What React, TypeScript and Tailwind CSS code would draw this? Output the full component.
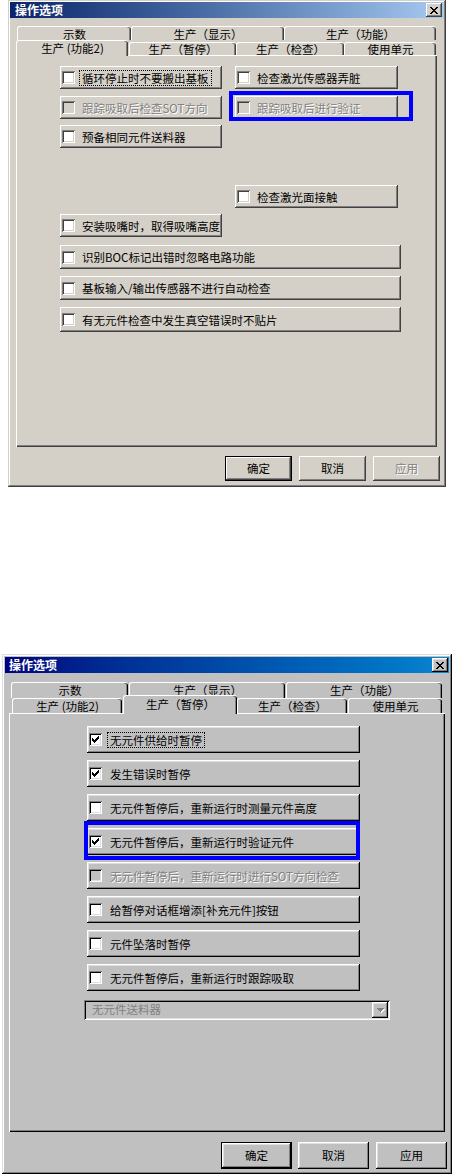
import React from "react";

type Theme = "a" | "b";

const T = {
  a: {
    raised:
      "bg-[#d4d0c8] shadow-[inset_-1px_-1px_0_#404040,inset_1px_1px_0_#ffffff,inset_-2px_-2px_0_#808080,inset_2px_2px_0_#d4d0c8]",
    window:
      "bg-[#d4d0c8] shadow-[inset_-1px_-1px_0_#404040,inset_1px_1px_0_#d4d0c8,inset_-2px_-2px_0_#808080,inset_2px_2px_0_#ffffff]",
    boxOn:
      "bg-white shadow-[inset_1px_1px_0_#808080,inset_-1px_-1px_0_#ffffff,inset_2px_2px_0_#404040,inset_-2px_-2px_0_#d4d0c8]",
    boxOff:
      "bg-[#d4d0c8] shadow-[inset_1px_1px_0_#808080,inset_-1px_-1px_0_#ffffff,inset_2px_2px_0_#404040,inset_-2px_-2px_0_#d4d0c8]",
    tab: "bg-[#d4d0c8] border-l border-t border-white rounded-t-[3px] shadow-[inset_-1px_0_0_#404040,inset_-2px_0_0_#808080]",
    panel:
      "bg-[#d4d0c8] shadow-[inset_1px_1px_0_#ffffff,inset_-1px_-1px_0_#404040,inset_-2px_-2px_0_#808080]",
    title: "bg-linear-to-r from-[#0a246a] to-[#a6caf0]",
  },
  b: {
    raised:
      "bg-[#c0c0c0] shadow-[inset_-1px_-1px_0_#000000,inset_1px_1px_0_#ffffff,inset_-2px_-2px_0_#808080,inset_2px_2px_0_#dfdfdf]",
    window:
      "bg-[#c0c0c0] shadow-[inset_-1px_-1px_0_#000000,inset_1px_1px_0_#dfdfdf,inset_-2px_-2px_0_#808080,inset_2px_2px_0_#ffffff]",
    boxOn:
      "bg-white shadow-[inset_1px_1px_0_#808080,inset_-1px_-1px_0_#ffffff,inset_2px_2px_0_#000000,inset_-2px_-2px_0_#dfdfdf]",
    boxOff:
      "bg-[#c0c0c0] shadow-[inset_1px_1px_0_#808080,inset_-1px_-1px_0_#ffffff,inset_2px_2px_0_#000000,inset_-2px_-2px_0_#dfdfdf]",
    tab: "bg-[#c0c0c0] border-l border-t border-white rounded-t-[3px] shadow-[inset_-1px_0_0_#000000,inset_-2px_0_0_#808080]",
    panel:
      "bg-[#c0c0c0] shadow-[inset_1px_1px_0_#ffffff,inset_-1px_-1px_0_#000000,inset_-2px_-2px_0_#808080]",
    title: "bg-linear-to-r from-[#000080] to-[#1084d0]",
  },
};

const DIS = "text-[#808080] [text-shadow:1px_1px_0_#ffffff]";

function Pixels({ rows, color }: { rows: string[]; color: string }) {
  return (
    <svg width={rows[0].length} height={rows.length} shapeRendering="crispEdges">
      {rows.flatMap((r, y) =>
        r.split("").map((c, x) =>
          c === "1" ? <rect key={x + "-" + y} x={x} y={y} width="1" height="1" fill={color} /> : null
        )
      )}
    </svg>
  );
}

const CLOSE = ["11000011", "01100110", "00111100", "00011000", "00111100", "01100110", "11000011"];
const CHECK = ["0000001", "0000011", "1000111", "1101110", "1111100", "0111000", "0010000"];
const ARROW = ["1111111", "0111110", "0011100", "0001000"];

function TitleBar({ theme, cls }: { theme: Theme; cls: string }) {
  return (
    <div className={`${T[theme].title} ${cls} h-[16px] flex items-center justify-between`}>
      <span className="text-white font-bold text-[12px] leading-none whitespace-nowrap">操作选项</span>
      <div className={`${T[theme].raised} w-[16px] h-[14px] flex items-center justify-center`}>
        <Pixels rows={CLOSE} color="#000000" />
      </div>
    </div>
  );
}

function Tab({ theme, label, cls, selected }: { theme: Theme; label: string; cls: string; selected?: boolean }) {
  return (
    <div
      className={`${T[theme].tab} ${cls} shrink-0 flex items-center justify-center ${
        selected ? "relative z-10 -mb-[1px]" : ""
      }`}
    >
      <span className="text-[11.5px] leading-[11px] whitespace-nowrap">{label}</span>
    </div>
  );
}

function CkBtn({
  theme,
  label,
  cls,
  checked,
  disabled,
  focus,
}: {
  theme: Theme;
  label: string;
  cls: string;
  checked?: boolean;
  disabled?: boolean;
  focus?: boolean;
}) {
  const textCls =
    theme === "a"
      ? focus
        ? "ml-[4px] px-[2px] border border-dotted border-black"
        : "ml-[7px]"
      : focus
      ? "ml-[5px] px-[2px] border border-dotted border-black"
      : "ml-[8px]";
  return (
    <div className={`${T[theme].raised} ${cls} shrink-0 flex items-center pl-[2px]`}>
      <div
        className={`${disabled ? T[theme].boxOff : T[theme].boxOn} w-[13px] h-[13px] shrink-0 flex items-center justify-center`}
      >
        {checked && <Pixels rows={CHECK} color="#000000" />}
      </div>
      <span className={`${textCls} text-[11.5px] leading-[14px] whitespace-nowrap ${disabled ? DIS : ""}`}>
        {label}
      </span>
    </div>
  );
}

function DlgBtn({
  theme,
  label,
  cls,
  def,
  disabled,
}: {
  theme: Theme;
  label: string;
  cls: string;
  def?: boolean;
  disabled?: boolean;
}) {
  return (
    <div className={`${cls} shrink-0 ${def ? "border border-black" : ""} flex`}>
      <div className={`${T[theme].raised} flex-1 flex items-center justify-center`}>
        <span className={`text-[11.5px] leading-none ${disabled ? DIS : ""}`}>{label}</span>
      </div>
    </div>
  );
}

function Blue({ cls }: { cls: string }) {
  return <div className={`absolute border-[4px] border-[#0000ff] pointer-events-none ${cls}`} />;
}

function TopDialog() {
  const t: Theme = "a";
  return (
    <div className={`${T.a.window} ml-[8px] w-[438px] h-[487px] flex flex-col`}>
      <TitleBar theme={t} cls="mx-[2px] mt-[2px] pl-[5px] pr-[2px]" />
      <div className="ml-[8px] mt-[8px] w-[421px] flex flex-col">
        <div className="flex h-[14px] pl-[1px]">
          <Tab theme={t} label="示数" cls="w-[114px] h-[14px] pt-[1px]" />
          <Tab theme={t} label="生产（显示）" cls="w-[153px] h-[14px] pt-[1px]" />
          <Tab theme={t} label="生产（功能）" cls="w-[152px] h-[14px] pt-[1px]" />
        </div>
        <div className="flex h-[15px] items-end">
          <Tab theme={t} label="生产 (功能2)" cls="w-[112px] h-[16px] pb-[1px]" selected />
          <Tab theme={t} label="生产（暂停）" cls="ml-[1px] w-[107px] h-[13px] pt-[1px]" />
          <Tab theme={t} label="生产（检查）" cls="w-[108px] h-[13px] pt-[1px]" />
          <Tab theme={t} label="使用单元" cls="w-[92px] h-[13px] pt-[1px]" />
        </div>
        <div className={`${T.a.panel} h-[392px] flex flex-col pl-[44px] pt-[11px]`}>
          <div className="flex gap-[13px]">
            <CkBtn theme={t} label="循环停止时不要搬出基板" cls="w-[162px] h-[23px]" focus />
            <CkBtn theme={t} label="检查激光传感器弄脏" cls="w-[163px] h-[23px]" />
          </div>
          <div className="flex gap-[13px] mt-[7px]">
            <CkBtn theme={t} label="跟踪吸取后检查SOT方向" cls="w-[162px] h-[23px]" disabled />
            <div className="relative">
              <CkBtn theme={t} label="跟踪吸取后进行验证" cls="w-[163px] h-[23px]" disabled />
              <Blue cls="left-[-6px] top-[-5px] right-[-15px] bottom-[-2px]" />
            </div>
          </div>
          <div className="flex mt-[6px]">
            <CkBtn theme={t} label="预备相同元件送料器" cls="w-[162px] h-[23px]" />
          </div>
          <div className="flex mt-[37px] pl-[175px]">
            <CkBtn theme={t} label="检查激光面接触" cls="w-[163px] h-[23px]" />
          </div>
          <div className="flex mt-[6px]">
            <CkBtn theme={t} label="安装吸嘴时，取得吸嘴高度" cls="w-[162px] h-[23px]" />
          </div>
          <div className="flex flex-col gap-[7px] mt-[8px]">
            <CkBtn theme={t} label="识别BOC标记出错时忽略电路功能" cls="w-[341px] h-[24px]" />
            <CkBtn theme={t} label="基板输入/输出传感器不进行自动检查" cls="w-[341px] h-[24px]" />
            <CkBtn theme={t} label="有无元件检查中发生真空错误时不贴片" cls="w-[341px] h-[25px]" />
          </div>
        </div>
      </div>
      <div className="flex justify-end gap-[7px] mt-[9px] pr-[6px]">
        <DlgBtn theme={t} label="确定" cls="w-[67px] h-[25px]" def />
        <DlgBtn theme={t} label="取消" cls="w-[67px] h-[25px]" />
        <DlgBtn theme={t} label="应用" cls="w-[67px] h-[25px]" disabled />
      </div>
    </div>
  );
}

function BottomDialog() {
  const t: Theme = "b";
  return (
    <div className={`${T.b.window} ml-[2px] mt-[167px] w-[450px] h-[520px] flex flex-col`}>
      <TitleBar theme={t} cls="mx-[3px] mt-[3px] pl-[4px] pr-[1px]" />
      <div className="ml-[7px] mt-[9px] w-[436px] flex flex-col">
        <div className="flex h-[16px]">
          <Tab theme={t} label="示数" cls="ml-[2px] w-[117px] h-[16px] pb-[1px]" />
          <Tab theme={t} label="生产（显示）" cls="ml-[1px] w-[156px] h-[16px] pb-[1px]" />
          <Tab theme={t} label="生产（功能）" cls="ml-[1px] w-[156px] h-[16px] pb-[1px]" />
        </div>
        <div className="flex h-[15px] items-end">
          <Tab theme={t} label="生产 (功能2)" cls="ml-[3px] w-[110px] h-[15px] pt-[1px]" />
          <Tab theme={t} label="生产（暂停）" cls="ml-[1px] w-[114px] h-[19px] pt-[1px] pb-[2px]" selected />
          <Tab theme={t} label="生产（检查）" cls="w-[110px] h-[15px] pt-[1px]" />
          <Tab theme={t} label="使用单元" cls="ml-[1px] w-[94px] h-[15px] pt-[1px]" />
        </div>
        <div className={`${T.b.panel} h-[419px] flex flex-col pl-[78px] pt-[13px]`}>
          <div className="flex flex-col items-start gap-[7px]">
            <CkBtn theme={t} label="无元件供给时暂停" cls="w-[273px] h-[27px]" checked focus />
            <CkBtn theme={t} label="发生错误时暂停" cls="w-[273px] h-[27px]" checked />
            <CkBtn theme={t} label="无元件暂停后，重新运行时测量元件高度" cls="w-[273px] h-[27px]" />
            <div className="relative">
              <CkBtn theme={t} label="无元件暂停后，重新运行时验证元件" cls="w-[273px] h-[27px]" checked />
              <Blue cls="left-[-3px] top-[-7px] right-[0px] bottom-[-5px]" />
            </div>
            <CkBtn theme={t} label="无元件暂停后，重新运行时进行SOT方向检查" cls="w-[273px] h-[27px]" disabled />
            <CkBtn theme={t} label="给暂停对话框增添[补充元件]按钮" cls="w-[273px] h-[27px]" />
            <CkBtn theme={t} label="元件坠落时暂停" cls="w-[273px] h-[27px]" />
            <CkBtn theme={t} label="无元件暂停后，重新运行时跟踪吸取" cls="w-[273px] h-[27px]" />
          </div>
          <div className="ml-[-3px] mt-[9px] w-[306px] h-[20px] bg-[#c0c0c0] shadow-[inset_1px_1px_0_#808080,inset_-1px_-1px_0_#ffffff,inset_2px_2px_0_#000000,inset_-2px_-2px_0_#dfdfdf] flex items-center pl-[8px] pr-[2px]">
            <span className="flex-1 text-[#808080] text-[11.5px] leading-none whitespace-nowrap">无元件送料器</span>
            <div className={`${T.b.raised} w-[16px] h-[16px] flex items-center justify-center`}>
              <div className="relative w-[7px] h-[4px]">
                <div className="absolute left-[1px] top-[1px]">
                  <Pixels rows={ARROW} color="#ffffff" />
                </div>
                <div className="absolute left-0 top-0">
                  <Pixels rows={ARROW} color="#808080" />
                </div>
              </div>
            </div>
          </div>
        </div>
      </div>
      <div className="flex justify-end mt-[10px] pr-[5px]">
        <DlgBtn theme={t} label="确定" cls="w-[71px] h-[27px]" def />
        <DlgBtn theme={t} label="取消" cls="ml-[6px] w-[71px] h-[27px]" />
        <DlgBtn theme={t} label="应用" cls="ml-[7px] w-[71px] h-[27px]" />
      </div>
    </div>
  );
}

export default function App() {
  return (
    <div className="w-[453px] h-[1174px] bg-white overflow-hidden font-['Noto_Sans_CJK_SC','Noto_Sans',sans-serif] text-black">
      <TopDialog />
      <BottomDialog />
    </div>
  );
}
